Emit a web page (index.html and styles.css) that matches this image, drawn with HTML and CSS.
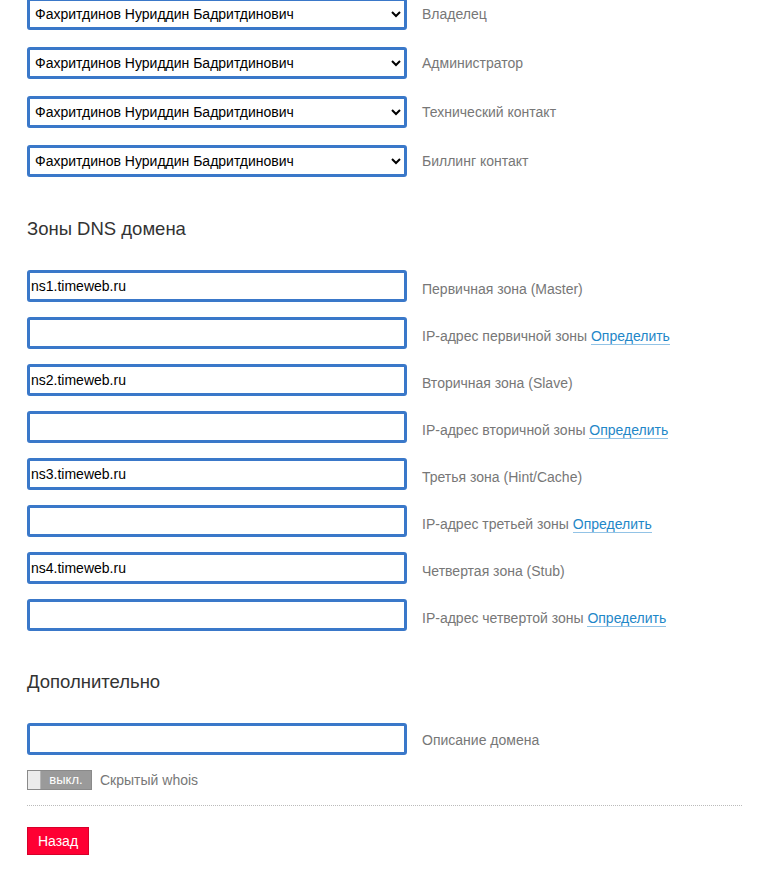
FILE: index.html
```html
<!DOCTYPE html>
<html lang="ru">
<head>
<meta charset="utf-8">
<link rel="stylesheet" href="styles.css">
</head>
<body>
<div class="page">
  <div class="rows-select">
    <div class="row row-sel">
      <select class="field"><option>Фахритдинов Нуриддин Бадритдинович</option></select>
      <span class="lbl">Владелец</span>
    </div>
    <div class="row row-sel">
      <select class="field"><option>Фахритдинов Нуриддин Бадритдинович</option></select>
      <span class="lbl">Администратор</span>
    </div>
    <div class="row row-sel">
      <select class="field"><option>Фахритдинов Нуриддин Бадритдинович</option></select>
      <span class="lbl">Технический контакт</span>
    </div>
    <div class="row row-sel">
      <select class="field"><option>Фахритдинов Нуриддин Бадритдинович</option></select>
      <span class="lbl">Биллинг контакт</span>
    </div>
  </div>

  <h2 class="section">Зоны DNS домена</h2>

  <div class="rows-input">
    <div class="row"><input class="field txt" value="ns1.timeweb.ru"><span class="lbl lbl-in">Первичная зона (Master)</span></div>
    <div class="row"><input class="field txt" value=""><span class="lbl lbl-in">IP-адрес первичной зоны <a class="link" href="#">Определить</a></span></div>
    <div class="row"><input class="field txt" value="ns2.timeweb.ru"><span class="lbl lbl-in">Вторичная зона (Slave)</span></div>
    <div class="row"><input class="field txt" value=""><span class="lbl lbl-in">IP-адрес вторичной зоны <a class="link" href="#">Определить</a></span></div>
    <div class="row"><input class="field txt" value="ns3.timeweb.ru"><span class="lbl lbl-in">Третья зона (Hint/Cache)</span></div>
    <div class="row"><input class="field txt" value=""><span class="lbl lbl-in">IP-адрес третьей зоны <a class="link" href="#">Определить</a></span></div>
    <div class="row"><input class="field txt" value="ns4.timeweb.ru"><span class="lbl lbl-in">Четвертая зона (Stub)</span></div>
    <div class="row"><input class="field txt" value=""><span class="lbl lbl-in">IP-адрес четвертой зоны <a class="link" href="#">Определить</a></span></div>
  </div>

  <h2 class="section section-extra">Дополнительно</h2>

  <div class="row"><input class="field txt" value=""><span class="lbl lbl-desc">Описание домена</span></div>

  <div class="toggle-row">
    <span class="toggle"><span class="knob"></span><span class="toggle-text">выкл.</span></span>
    <span class="lbl">Скрытый whois</span>
  </div>

  <hr class="sep">

  <button class="btn-back" type="button">Назад</button>
</div>
</body>
</html>
```

FILE: styles.css
```css
html, body {
  margin: 0;
  padding: 0;
  background: #fff;
}

body {
  font-family: "Liberation Sans", Arial, sans-serif;
  font-size: 14px;
  color: #333;
}

.page {
  width: 715px;
  padding-left: 27px;
  margin-top: -2px;
}

.rows-select {
  display: flex;
  flex-direction: column;
  gap: 17px;
}

.rows-input {
  display: flex;
  flex-direction: column;
  gap: 15px;
}

.row {
  display: flex;
  align-items: flex-start;
  gap: 15px;
}

.field {
  box-sizing: border-box;
  width: 380px;
  height: 32px;
  border: 3px solid #3a78c9;
  border-radius: 3px;
  background: #fff;
  font-family: "Liberation Sans", Arial, sans-serif;
  font-size: 14px;
  color: #000;
  margin: 0;
  flex: none;
  outline: none;
}

select.field {
  padding: 0 2px 0 1px;
}

.txt {
  padding: 0 1px;
}

.lbl {
  color: #777;
  font-size: 14px;
  line-height: 20px;
}

.row-sel .lbl {
  padding-top: 6px;
}

.lbl-in {
  padding-top: 9px;
}

.lbl-desc {
  padding-top: 7px;
}

.link {
  color: #1f87c8;
  text-decoration: none;
  border-bottom: 1px solid #92c3e6;
}

.section {
  margin: 41px 0 30px;
  font-size: 18.5px;
  font-weight: normal;
  line-height: 22px;
  color: #333;
}

.section-extra {
  margin: 40px 0 30px;
}

.toggle-row {
  display: flex;
  align-items: center;
  gap: 8px;
  margin-top: 15px;
}

.toggle {
  display: flex;
  box-sizing: border-box;
  width: 65px;
  height: 20px;
  border: 1px solid #8a8a8a;
  background: #9a9a9a;
}

.knob {
  width: 12px;
  background: #ececec;
  border-right: 1px solid #b5b5b5;
}

.toggle-text {
  flex: 1;
  color: #fff;
  font-size: 13px;
  line-height: 18px;
  text-align: center;
}

.sep {
  margin: 15px 0 21px;
  border: 0;
  border-top: 1px dotted #bbb;
  height: 0;
}

.btn-back {
  display: block;
  box-sizing: border-box;
  width: 62px;
  height: 28px;
  padding: 0;
  border: 1px solid #d6002a;
  border-radius: 0;
  background: #ff0033;
  color: #fff;
  font-family: "Liberation Sans", Arial, sans-serif;
  font-size: 14px;
}
```
